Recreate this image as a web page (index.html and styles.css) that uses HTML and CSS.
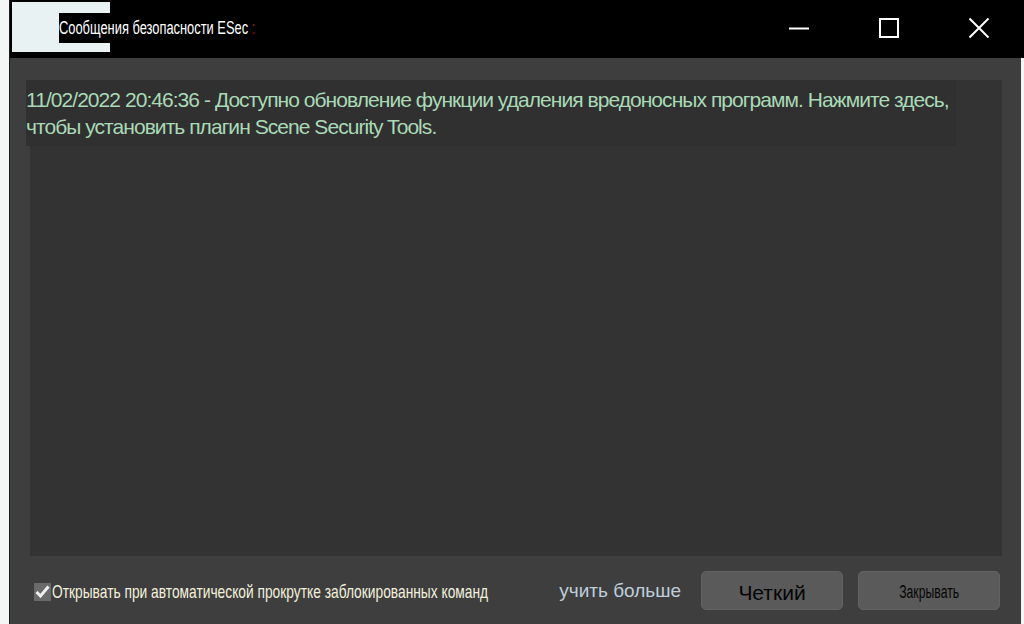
FILE: index.html
```html
<!DOCTYPE html>
<html lang="ru">
<head>
<meta charset="utf-8">
<title>Сообщения безопасности ESec</title>
<link rel="stylesheet" href="styles.css">
</head>
<body>
<div class="screen">
  <div class="window">
    <header class="titlebar">
      <div class="logo"></div>
      <div class="title"><span class="title-text">Сообщения безопасности ESec <span class="title-mark">:</span></span></div>
      <div class="controls">
        <div class="ctl">
          <svg width="22" height="22" viewBox="0 0 22 22"><line x1="1" y1="11.5" x2="21" y2="11.5" stroke="#fff" stroke-width="2"/></svg>
        </div>
        <div class="ctl">
          <svg width="22" height="22" viewBox="0 0 22 22"><rect x="2" y="2" width="18" height="18" fill="none" stroke="#fff" stroke-width="2"/></svg>
        </div>
        <div class="ctl">
          <svg width="22" height="22" viewBox="0 0 22 22"><path d="M1.5 1.5 L20.5 20.5 M20.5 1.5 L1.5 20.5" stroke="#fff" stroke-width="2"/></svg>
        </div>
      </div>
    </header>
    <main class="content">
      <div class="panel">
        <p class="message">11/02/2022 20:46:36 - Доступно обновление функции удаления вредоносных программ. Нажмите здесь, чтобы установить плагин Scene Security Tools.</p>
      </div>
      <footer class="footer">
        <label class="check">
          <span class="box">
            <svg width="15" height="13" viewBox="0 0 15 13"><path d="M1.5 7 L5.5 11 L13.5 1.5" fill="none" stroke="#eeeeee" stroke-width="3"/></svg>
          </span>
          <span class="check-label"><span class="check-text">Открывать при автоматической прокрутке заблокированных команд</span></span>
        </label>
        <span class="learn">учить больше</span>
        <button class="btn btn-main">Четкий</button>
        <button class="btn btn-close"><span class="close-text">Закрывать</span></button>
      </footer>
    </main>
  </div>
</div>
</body>
</html>
```

FILE: styles.css
```css
html, body {
  margin: 0;
  padding: 0;
}
body {
  width: 1024px;
  height: 624px;
  overflow: hidden;
  background: #f4f6f6;
  font-family: "Liberation Sans", Arial, sans-serif;
}
.screen {
  display: flex;
  height: 624px;
  padding-left: 9px;
}
.window {
  flex: 1;
  display: flex;
  flex-direction: column;
  border-left: 1px solid #1c1c1c;
}
.titlebar {
  height: 58px;
  background: #000;
  display: flex;
  align-items: flex-start;
  flex-shrink: 0;
}
.logo {
  width: 98px;
  height: 50px;
  margin: 2px 0 0 2px;
  background: #e9f2f2;
  flex-shrink: 0;
}
.title {
  margin: 13px 0 0 -51px;
  width: 200px;
  height: 30px;
  line-height: 31px;
  background: #000;
  white-space: nowrap;
}
.title-text {
  display: inline-block;
  color: #fff;
  font-size: 18px;
  transform: scaleX(0.715);
  transform-origin: left center;
}
.title-mark {
  color: #a01818;
}
.controls {
  margin-left: auto;
  display: flex;
  height: 58px;
}
.ctl {
  width: 90px;
  height: 56px;
  display: flex;
  align-items: center;
  justify-content: center;
}
.content {
  flex: 1;
  background: #3e3e3e;
  margin-right: 3px;
  display: flex;
  flex-direction: column;
  padding: 22px 19px 0 20px;
}
.panel {
  height: 476px;
  background: #333333;
  flex-shrink: 0;
}
.message {
  margin: 0 0 0 -4px;
  padding: 6px 0 6px 0;
  background: #303030;
  color: #a9dab6;
  font-size: 21px;
  letter-spacing: -0.95px;
  line-height: 27px;
  width: 930px;
}
.footer {
  flex: 1;
  display: flex;
  align-items: center;
  padding-top: 1px;
}
.check {
  display: flex;
  align-items: center;
  margin-left: 4px;
}
.box {
  width: 17px;
  height: 18px;
  background: #6a6a6a;
  display: flex;
  align-items: center;
  justify-content: center;
  margin-top: 2px;
  flex-shrink: 0;
}
.check-label {
  width: 438px;
  white-space: nowrap;
  margin-top: 2px;
  margin-left: 1px;
}
.check-text {
  display: inline-block;
  color: #f3f1dc;
  font-size: 19px;
  transform: scaleX(0.725);
  transform-origin: left center;
}
.learn {
  margin-left: auto;
  color: #bfcedb;
  font-size: 19px;
  margin-right: 20px;
  white-space: nowrap;
}
.btn {
  width: 142px;
  height: 39px;
  flex-shrink: 0;
  background: #5a5a5a;
  border: 1px solid #636363;
  border-radius: 5px;
  color: #050505;
  padding: 0;
  font-family: "Liberation Sans", Arial, sans-serif;
  white-space: nowrap;
}
.btn-main {
  font-size: 21px;
  padding-top: 4px;
}
.btn-close {
  margin-left: 15px;
  margin-right: 2px;
  font-size: 18px;
  padding-top: 4px;
}
.close-text {
  display: inline-block;
  transform: scaleX(0.68);
}
```
